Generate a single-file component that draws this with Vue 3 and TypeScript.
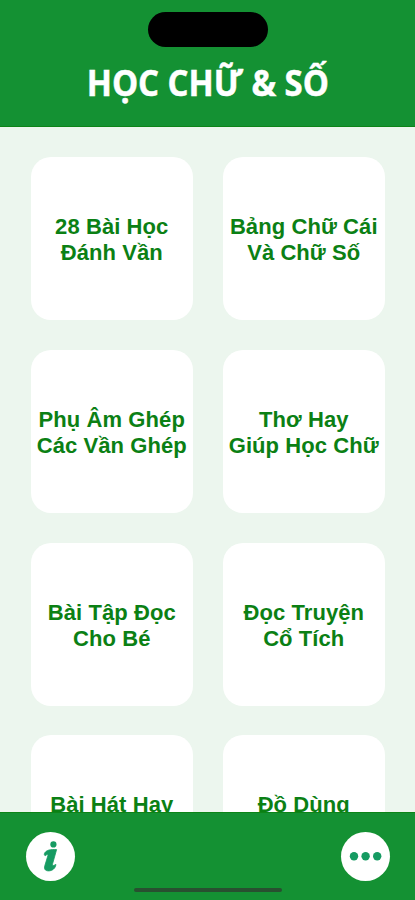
<script setup lang="ts">
interface Lesson {
  id: number
  lines: string[]
}

const lessons: Lesson[] = [
  { id: 1, lines: ['28 Bài Học', 'Đánh Vần'] },
  { id: 2, lines: ['Bảng Chữ Cái', 'Và Chữ Số'] },
  { id: 3, lines: ['Phụ Âm Ghép', 'Các Vần Ghép'] },
  { id: 4, lines: ['Thơ Hay', 'Giúp Học Chữ'] },
  { id: 5, lines: ['Bài Tập Đọc', 'Cho Bé'] },
  { id: 6, lines: ['Đọc Truyện', 'Cổ Tích'] },
  { id: 7, lines: ['Bài Hát Hay'] },
  { id: 8, lines: ['Đồ Dùng'] },
]
</script>

<template>
  <div class="screen">
    <header class="header">
      <div class="island"></div>
      <h1 class="title">HỌC CHỮ &amp; SỐ</h1>
    </header>

    <main class="content">
      <div class="grid">
        <button v-for="lesson in lessons" :key="lesson.id" class="card" type="button">
          <span v-for="line in lesson.lines" :key="line" class="line">{{ line }}</span>
        </button>
      </div>
    </main>

    <footer class="footer">
      <button class="round" type="button">
        <svg viewBox="0 0 49 49" width="49" height="49">
          <circle cx="27.4" cy="12.4" r="3.1" fill="#169b62" />
          <path
            d="M18.8 20.8C20.6 18.2 24.2 17.1 30.6 17.6L26.6 31.8C26 33.9 27.1 33.9 29.9 32.4C29.7 36 26.4 38.9 22.6 38.9C19.2 38.9 17.8 36.9 18.8 33.7L21.9 23.6C22.3 22.2 21 22.3 19.2 23.7C18.2 23.4 18 22 18.8 20.8Z"
            fill="#169b62"
            stroke="#169b62"
            stroke-width="0.8"
            stroke-linejoin="round"
          />
        </svg>
      </button>
      <button class="round" type="button">
        <svg viewBox="0 0 49 49" width="49" height="49" fill="#169b62">
          <circle cx="13" cy="24.3" r="4.2" />
          <circle cx="24.6" cy="24.3" r="4.2" />
          <circle cx="36.2" cy="24.3" r="4.2" />
        </svg>
      </button>
      <div class="home-bar"></div>
    </footer>
  </div>
</template>

<style>
body {
  margin: 0;
  overflow: hidden;
}
</style>

<style scoped>
.screen {
  display: flex;
  flex-direction: column;
  width: 415px;
  height: 900px;
  overflow: hidden;
  background: #ecf6ee;
}

.header {
  box-sizing: border-box;
  display: flex;
  flex-direction: column;
  align-items: center;
  flex: none;
  height: 127px;
  padding-top: 11.5px;
  background: #149133;
  border-bottom: 1px solid #0d8418;
}

.island {
  width: 120px;
  height: 35px;
  border-radius: 17.5px;
  background: #000;
}

.title {
  margin: 12px 0 0;
  color: #fff;
  font: 700 35px/48px 'Open Sans', 'Noto Sans', sans-serif;
  white-space: nowrap;
  transform: scaleX(0.94);
  -webkit-text-stroke: 0.5px #fff;
}

.content {
  flex: 1;
  min-height: 0;
  overflow: hidden;
}

.grid {
  display: grid;
  grid-template-columns: 162.5px 162.5px;
  grid-auto-rows: 163px;
  gap: 29.8px 29.5px;
  padding: 30px 0 0 30.5px;
}

.card {
  display: flex;
  flex-direction: column;
  align-items: center;
  justify-content: flex-start;
  padding: 57px 0 0;
  border: 0;
  border-radius: 20px;
  background: #fff;
  color: #0b8014;
  font: 700 22px/26px 'Liberation Sans', Arial, sans-serif;
  letter-spacing: 0.08px;
}

.line {
  white-space: nowrap;
}

.footer {
  position: relative;
  box-sizing: border-box;
  display: flex;
  justify-content: space-between;
  flex: none;
  height: 88px;
  padding: 18.5px 25.5px 0 26px;
  background: #149133;
  border-top: 1px solid #0d8418;
}

.round {
  width: 49px;
  height: 49px;
  padding: 0;
  border: 0;
  border-radius: 50%;
  background: #fff;
}

.round svg {
  display: block;
}

.home-bar {
  position: absolute;
  left: 134px;
  bottom: 8px;
  width: 148px;
  height: 4px;
  border-radius: 2px;
  background: #285030;
}
</style>
